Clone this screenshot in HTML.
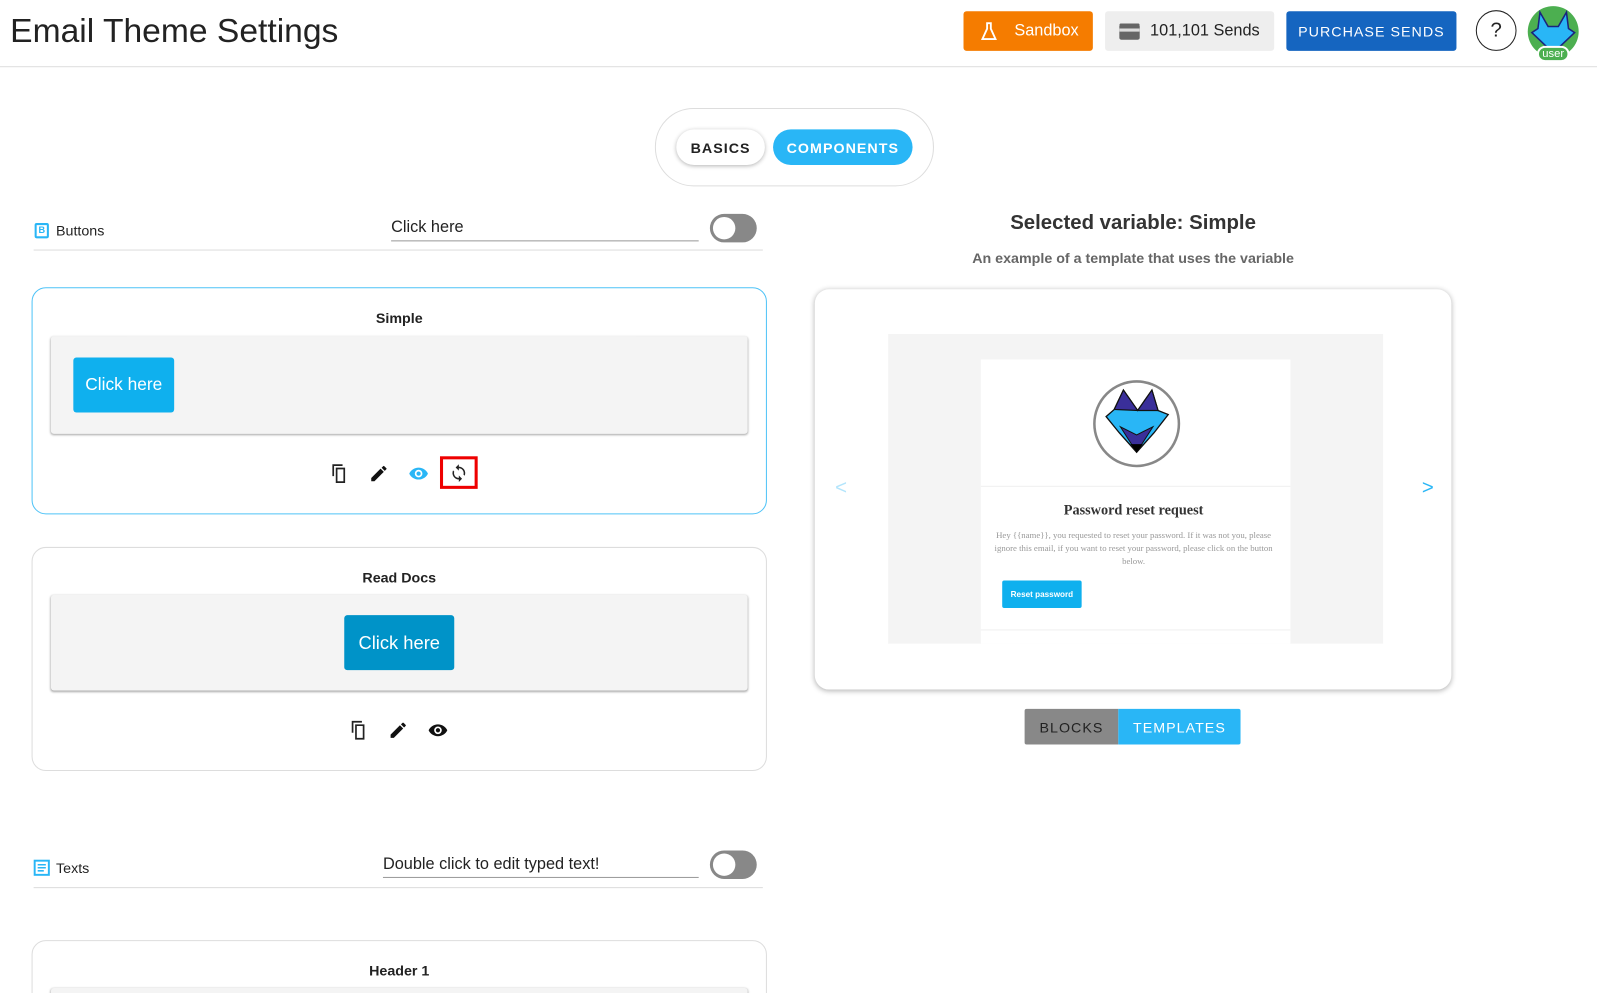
<!DOCTYPE html>
<html style="width:1597px;height:993px;overflow:hidden"><head><meta charset="utf-8"><style>
*{box-sizing:border-box;margin:0;padding:0}
body{width:1597px;height:993px;overflow:hidden;background:#fff;font-family:"Liberation Sans",Roboto,sans-serif;color:#222;position:relative}
#w{position:absolute;left:0;top:0;width:1568px;height:975px;overflow:hidden;transform:scale(1.0185);transform-origin:0 0}
.abs{position:absolute}
.hdr{left:0;top:0;width:1580px;height:66px;border-bottom:1px solid #ddd}
.title{left:10px;top:11px;font-size:33px;color:#222}
.btn{position:absolute;display:flex;align-items:center;justify-content:center;border-radius:3px;font-size:16px}
.card{position:absolute;border:1px solid #ddd;border-radius:14px;background:#fff;overflow:hidden}
.gray{position:absolute;background:#f4f4f4;border-radius:3px;box-shadow:0 1px 2px rgba(0,0,0,.35)}
.cb{position:absolute;background:#0fb0ee;color:#fff;font-size:17px;display:flex;align-items:center;justify-content:center;border-radius:3px}
.lbl{position:absolute;font-size:14px;font-weight:bold;width:100%;text-align:center}
.tog{position:absolute;width:46px;height:28px;border-radius:14px;background:#888}
.tog:after{content:"";position:absolute;left:3px;top:3px;width:22px;height:22px;border-radius:50%;background:#fff}
.ic{position:absolute}
</style></head><body><div id="w">
<div class="abs hdr"></div>
<div class="abs title">Email Theme Settings</div>
<div class="btn" style="left:946px;top:11px;width:127px;height:39px;background:#f57c00;color:#fff"><svg width="22" height="22" viewBox="0 0 24 24" style="margin-right:14px"><path d="M9 3h6M10 3v6L5 20h14L14 9V3" fill="none" stroke="#fff" stroke-width="2"/></svg>Sandbox</div>
<div class="btn" style="left:1085px;top:11px;width:166px;height:39px;background:#eee;color:#222"><span style="width:20px;height:16px;background:#666;border-radius:2px;margin-right:10px;display:inline-block;border-top:5px solid #666;box-shadow:inset 0 3px 0 #ddd"></span>101,101 Sends</div>
<div class="btn" style="left:1263px;top:11px;width:167px;height:39px;background:#1565c0;color:#fff;font-size:14px;letter-spacing:1px">PURCHASE SENDS</div>
<div class="abs" style="left:1449px;top:10px;width:40px;height:40px;border:1px solid #222;border-radius:50%;text-align:center;line-height:38px;font-size:20px">?</div>
<div class="abs" style="left:1500px;top:6px;width:50px;height:50px;border-radius:50%;background:#4caf50;overflow:hidden"><svg width="50" height="50" viewBox="0 0 50 50"><path d="M12 6l8 14h10l8-14 2 16 6 4-21 20L4 26l6-4z" fill="#29b6f6" stroke="#1a237e" stroke-width="1.5"/></svg></div>
<div class="abs" style="left:1509px;top:45px;width:32px;height:16px;background:#4caf50;border:2px solid #fff;border-radius:8px;color:#fff;font-size:11px;text-align:center;line-height:12px">user</div>

<div class="abs" style="left:643px;top:106px;width:274px;height:77px;border:1px solid #ddd;border-radius:38px"></div>
<div class="btn" style="left:664px;top:127px;width:87px;height:35px;border-radius:18px;background:#fff;box-shadow:0 1px 4px rgba(0,0,0,.3);font-size:14px;font-weight:bold;letter-spacing:1px">BASICS</div>
<div class="btn" style="left:759px;top:127px;width:137px;height:35px;border-radius:18px;background:#29b6f6;color:#fff;font-size:14px;font-weight:bold;letter-spacing:1px">COMPONENTS</div>

<div class="abs" style="left:34px;top:219px;width:14px;height:15px;border:2px solid #29b6f6;border-radius:2px;font-size:9px;color:#29b6f6;text-align:center;line-height:11px;font-weight:bold">B</div>
<div class="abs" style="left:55px;top:218px;font-size:14px">Buttons</div>
<div class="abs" style="left:384px;top:215px;width:302px;height:22px;border-bottom:1px solid #999;font-size:16px">Click here</div>
<div class="tog" style="left:697px;top:210px"></div>
<div class="abs" style="left:33px;top:245px;width:716px;height:1px;background:#ddd"></div>

<div class="card" style="left:31px;top:282px;width:722px;height:223px;border-color:#4fc3f7">
<div class="lbl" style="top:21px">Simple</div>
<div class="gray" style="left:18px;top:47px;width:684px;height:96px"></div>
<div class="cb" style="left:40px;top:68px;width:99px;height:54px">Click here</div>
</div>
<svg class="ic" style="left:323px;top:455px" width="20" height="20" viewBox="0 0 24 24"><path d="M16 1H4v14h2V3h10zm3 4H8v18h11zm-2 16H10V7h7z" fill="#222"/></svg>
<svg class="ic" style="left:362px;top:455px" width="20" height="20" viewBox="0 0 24 24"><path d="M3 17.2V21h3.8L17.8 9.9l-3.8-3.8zM20.7 7a1 1 0 000-1.4l-2.3-2.3a1 1 0 00-1.4 0l-1.8 1.8 3.7 3.7z" fill="#111"/></svg>
<svg class="ic" style="left:401px;top:455px" width="20" height="20" viewBox="0 0 24 24"><path d="M12 5C7 5 2.7 8.1 1 12c1.7 3.9 6 7 11 7s9.3-3.1 11-7c-1.7-3.9-6-7-11-7zm0 11.5a4.5 4.5 0 110-9 4.5 4.5 0 010 9zm0-7a2.5 2.5 0 100 5 2.5 2.5 0 000-5z" fill="#29b6f6"/></svg>
<div class="abs" style="left:432px;top:448px;width:37px;height:32px;border:3px solid #e00"></div>
<svg class="ic" style="left:441px;top:455px" width="19" height="19" viewBox="0 0 24 24"><path d="M12 4V1L8 5l4 4V6a6 6 0 015.7 7.8l1.5 1.5A8 8 0 0012 4zm0 14a6 6 0 01-5.7-7.8L4.8 8.7A8 8 0 0012 20v3l4-4-4-4z" fill="#222"/></svg>

<div class="card" style="left:31px;top:537px;width:722px;height:220px">
<div class="lbl" style="top:21px">Read Docs</div>
<div class="gray" style="left:18px;top:46px;width:684px;height:94px"></div>
<div class="cb" style="left:306px;top:66px;width:108px;height:54px;background:#0093c8;font-size:18px">Click here</div>
</div>
<svg class="ic" style="left:342px;top:707px" width="20" height="20" viewBox="0 0 24 24"><path d="M16 1H4v14h2V3h10zm3 4H8v18h11zm-2 16H10V7h7z" fill="#222"/></svg>
<svg class="ic" style="left:381px;top:707px" width="20" height="20" viewBox="0 0 24 24"><path d="M3 17.2V21h3.8L17.8 9.9l-3.8-3.8zM20.7 7a1 1 0 000-1.4l-2.3-2.3a1 1 0 00-1.4 0l-1.8 1.8 3.7 3.7z" fill="#111"/></svg>
<svg class="ic" style="left:420px;top:707px" width="20" height="20" viewBox="0 0 24 24"><path d="M12 5C7 5 2.7 8.1 1 12c1.7 3.9 6 7 11 7s9.3-3.1 11-7c-1.7-3.9-6-7-11-7zm0 11.5a4.5 4.5 0 110-9 4.5 4.5 0 010 9zm0-7a2.5 2.5 0 100 5 2.5 2.5 0 000-5z" fill="#111"/></svg>

<svg class="ic" style="left:33px;top:844px" width="16" height="16" viewBox="0 0 16 16"><rect x="1" y="1" width="14" height="14" fill="none" stroke="#29b6f6" stroke-width="2"/><path d="M4 5h8M4 8h8M4 11h6" stroke="#29b6f6" stroke-width="1.5"/></svg>
<div class="abs" style="left:55px;top:844px;font-size:14px">Texts</div>
<div class="abs" style="left:376px;top:840px;width:310px;height:22px;border-bottom:1px solid #999;font-size:16px">Double click to edit typed text!</div>
<div class="tog" style="left:697px;top:835px"></div>
<div class="abs" style="left:33px;top:871px;width:716px;height:1px;background:#ddd"></div>
<div class="card" style="left:31px;top:923px;width:722px;height:200px">
<div class="lbl" style="top:21px">Header 1</div>
<div class="gray" style="left:18px;top:46px;width:684px;height:94px"></div>
</div>

<div class="abs" style="left:800px;top:208px;width:625px;text-align:center;font-size:20px;font-weight:bold;color:#333">Selected variable: Simple</div>
<div class="abs" style="left:800px;top:245px;width:625px;text-align:center;font-size:14px;font-weight:bold;color:#666">An example of a template that uses the variable</div>
<div class="abs" style="left:800px;top:284px;width:625px;height:393px;border-radius:14px;box-shadow:0 1px 5px rgba(0,0,0,.3);background:#fff"></div>
<div class="abs" style="left:820px;top:468px;font-size:20px;color:#b3e5fc">&lt;</div>
<div class="abs" style="left:1396px;top:468px;font-size:20px;color:#29b6f6">&gt;</div>
<div class="abs" style="left:872px;top:328px;width:486px;height:304px;background:#f4f4f4;overflow:hidden">
 <div class="abs" style="left:91px;top:25px;width:304px;height:290px;background:#fff">
  <svg class="abs" style="left:109px;top:19px" width="88" height="88" viewBox="0 0 88 88"><circle cx="44" cy="44" r="41.5" fill="#fff" stroke="#888" stroke-width="2.5"/><path d="M22 30l9-19 14 20 14-20 6 20 10 4-14 18-17 19-17-19-13-16z" fill="#29b6f6" stroke="#111" stroke-width="1.3"/><path d="M22 30l9-19 14 20zM45 31l14-20 6 20z" fill="#3a2f9a" stroke="#111" stroke-width="1.2"/><path d="M28 47l16 25 16-25-16 8z" fill="#3a2f9a" stroke="#111" stroke-width="1"/><path d="M38 64h12l-6 8z" fill="#000"/></svg>
  <div class="abs" style="left:0;top:124px;width:304px;height:1px;background:#f0f0f0"></div>
  <div class="abs" style="left:0;top:141px;width:300px;text-align:center;font-family:'Liberation Serif',serif;font-weight:bold;font-size:14px;color:#333">Password reset request</div>
  <div class="abs" style="left:12px;top:166px;width:276px;text-align:center;font-family:'Liberation Serif',serif;font-size:8.6px;line-height:13px;color:#999">Hey {{name}}, you requested to reset your password. If it was not you, please ignore this email, if you want to reset your password, please click on the button below.</div>
  <div class="abs" style="left:21px;top:217px;width:78px;height:27px;background:#0fb0ee;color:#fff;font-size:8px;font-weight:bold;text-align:center;line-height:27px;border-radius:2px">Reset password</div>
  <div class="abs" style="left:0;top:265px;width:304px;height:1px;background:#f0f0f0"></div>
 </div>
</div>
<div class="btn" style="left:1006px;top:696px;width:92px;height:35px;background:#888;color:#222;border-radius:2px 0 0 2px;font-size:14px;letter-spacing:1px">BLOCKS</div>
<div class="btn" style="left:1098px;top:696px;width:120px;height:35px;background:#29b6f6;color:#fff;border-radius:0 2px 2px 0;font-size:14px;letter-spacing:1px">TEMPLATES</div>
</div></body></html>
